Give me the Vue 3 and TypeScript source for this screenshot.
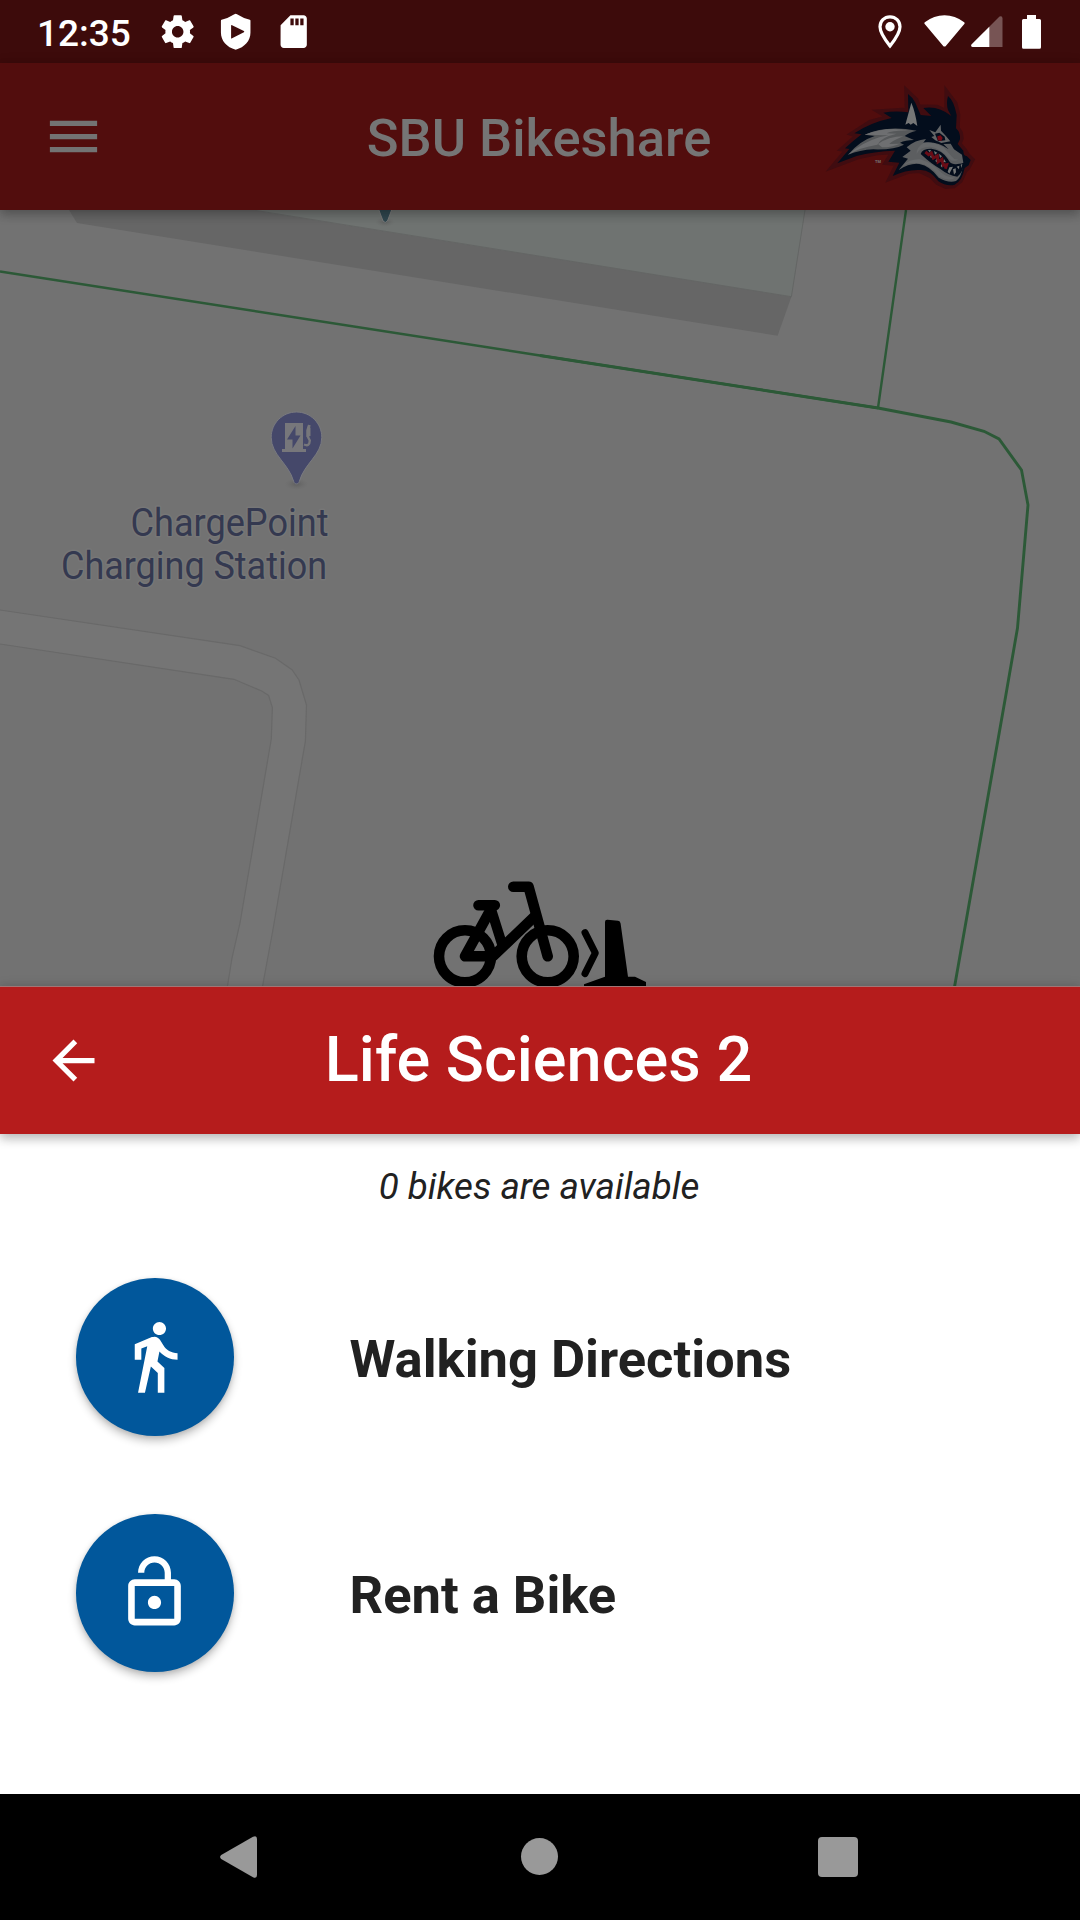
<script setup lang="ts">
interface Action {
  label: string
  icon: string
}

const stationName = 'Life Sciences 2'
const bikesAvailable = 0

const actions: Action[] = [
  {
    label: 'Walking Directions',
    icon: 'M13.5 5.5c1.1 0 2-.9 2-2s-.9-2-2-2-2 .9-2 2 .9 2 2 2zM9.8 8.9L7 23h2.1l1.8-8 2.1 2v6h2v-7.5l-2.1-2 .6-3C14.8 12 16.8 13 19 13v-2c-1.9 0-3.5-1-4.3-2.4l-1-1.6c-.4-.6-1-1-1.7-1-.3 0-.5.1-.8.1L6 8.3V13h2V9.6l1.8-.7',
  },
  {
    label: 'Rent a Bike',
    icon: 'M12 17c1.1 0 2-.9 2-2s-.9-2-2-2-2 .9-2 2 .9 2 2 2zm6-9h-1V6c0-2.76-2.24-5-5-5S7 3.24 7 6h1.9c0-1.71 1.39-3.1 3.1-3.1 1.71 0 3.1 1.39 3.1 3.1v2H6c-1.1 0-2 .9-2 2v10c0 1.1.9 2 2 2h12c1.1 0 2-.9 2-2V10c0-1.1-.9-2-2-2zm0 12H6V10h12v10z',
  },
]
</script>

<template>
  <div class="screen">
    <div class="status-bar">
      <span class="clock">12:35</span>
      <div class="notifications">
        <svg class="note" viewBox="0 0 24 24">
          <path
            d="M19.43 12.98c.04-.32.07-.64.07-.98s-.03-.66-.07-.98l2.11-1.65c.19-.15.24-.42.12-.64l-2-3.46c-.12-.22-.39-.3-.61-.22l-2.49 1c-.52-.4-1.08-.73-1.69-.98l-.38-2.65C14.46 2.18 14.25 2 14 2h-4c-.25 0-.46.18-.49.42l-.38 2.65c-.61.25-1.17.59-1.69.98l-2.49-1c-.23-.09-.49 0-.61.22l-2 3.46c-.13.22-.07.49.12.64l2.11 1.65c-.04.32-.07.65-.07.98s.03.66.07.98l-2.11 1.65c-.19.15-.24.42-.12.64l2 3.46c.12.22.39.3.61.22l2.49-1c.52.4 1.08.73 1.69.98l.38 2.65c.03.24.24.42.49.42h4c.25 0 .46-.18.49-.42l.38-2.65c.61-.25 1.17-.59 1.69-.98l2.49 1c.23.09.49 0 .61-.22l2-3.46c.12-.22.07-.49-.12-.64l-2.11-1.65zM12 15.5c-1.93 0-3.5-1.57-3.5-3.5s1.57-3.5 3.5-3.5 3.5 1.57 3.5 3.5-1.57 3.5-3.5 3.5z"
          />
        </svg>
        <svg class="note" viewBox="0 0 24 24">
          <path
            fill-rule="evenodd"
            d="M12 1.1 Q12.4 1.1 12.8 1.4 Q16.500 3.800 20.600 4.700 Q21 4.800 21 5.300V12.500C21 17.500 17.500 21.500 12 23C6.500 21.500 3 17.500 3 12.500V5.300Q3 4.800 3.400 4.700Q7.500 3.800 11.200 1.400Q11.600 1.100 12 1.100zM9.200 8.200V15.800Q9.300 16.300 9.800 16L17 12.400Q17.500 12 17 11.600L9.800 8Q9.300 7.700 9.200 8.200z"
          />
        </svg>
        <svg class="note" viewBox="0 0 24 24">
          <path
            d="M18 2h-8L4.02 8 4 20c0 1.1.9 2 2 2h12c1.1 0 2-.9 2-2V4c0-1.1-.9-2-2-2zm-6 6h-2V4h2v4zm3 0h-2V4h2v4zm3 0h-2V4h2v4z"
          />
        </svg>
      </div>
      <div class="system-icons">
        <svg class="gps" viewBox="0 0 24 34">
          <path
            d="M12 1.800C6.300 1.800 2 6.200 2 11.800C2 18.500 12 31 12 31S22 18.500 22 11.800C22 6.200 17.700 1.800 12 1.800z"
            fill="none"
            stroke="#fff"
            stroke-width="3.200"
          />
          <circle cx="12" cy="11.800" r="4.700" />
        </svg>
        <svg class="wifi" viewBox="0 0 41 32">
          <path d="M20.500 31.600Q21.300 31.600 22 30.700L40.500 8.800Q41 8 40.200 7.300Q31 .3 20.500 .3T.8 7.300Q0 8 .5 8.800L19 30.700Q19.700 31.600 20.500 31.600z" />
        </svg>
        <svg class="signal" viewBox="0 0 32 32">
          <path d="M.500 28.500L28.500 .600Q31.500 -.5 31.500 2.500V31H1.500Q-.5 30.500 .5 28.500z" opacity=".3" />
          <path d="M18.300 10.700V31H1.500Q-.5 30.500 .5 28.500z" />
        </svg>
        <svg class="battery" viewBox="0 0 19 34">
          <path d="M5 0H14V4H17.500Q19 4 19 5.500V32.300Q19 33.800 17.500 33.800H1.500Q0 33.800 0 32.300V5.500Q0 4 1.500 4H5z" />
        </svg>
      </div>
    </div>

    <header class="app-bar">
      <svg class="bar-icon" viewBox="0 0 24 24">
        <path d="M3 18h18v-2H3v2zm0-5h18v-2H3v2zm0-7v2h18V6H3z" />
      </svg>
      <h1 class="app-title">SBU Bikeshare</h1>
      <svg class="mascot" viewBox="0 0 510 360">
        <path
          class="halo"
          d="M52 250L88 207L75 205L120 165L105 160L152 130L215 113L190 98L248 94L265 97L264 42L285 62L300 105L330 108L310 84L350 85L392 106L384 90L384 48L402 72L410 105L408 145L418 160L420 175L413 192L430 212L440 228L452 240L440 262L432 270L418 300L400 314L378 316L355 305L335 285L300 268L265 270L218 288L238 248L205 245L225 212L170 215L110 228z"
        />
        <path
          class="navy"
          d="M52 250L88 207L75 205Q96 185 125 163L103 160Q150 128 215 114L190 98Q225 92 265 97L264 42Q278 52 286 68L302 105L334 108L310 84Q355 76 394 108L384 90Q378 70 384 48Q402 62 410 105L408 145Q422 158 420 178L413 192L430 212Q430 228 440 228L452 240L446 256L434 264Q426 304 404 314Q380 320 355 304Q330 268 300 270Q260 268 218 288L238 248L205 245L225 212Q160 214 110 228z"
        />
        <path
          fill="#56585a"
          d="M84 224Q120 182 164 168L134 164Q200 134 290 152Q266 158 254 168L282 180Q256 180 240 188L252 194Q222 210 160 208Q120 210 84 224z"
        />
        <path
          fill="#6e6f71"
          d="M84 224Q126 188 178 172L206 166L134 164Q200 138 268 152Q220 150 200 160L230 161Q182 172 172 194Q120 202 84 224zM174 192Q205 170 250 169Q214 184 208 192L240 191Q216 202 186 202z"
        />
        <path fill="#757676" d="M256 134L274 68Q286 96 292 138L280 129L272 134L266 129z" />
        <path
          fill="#5c5e60"
          d="M236 270L264 236L247 231L272 212L260 202Q285 180 318 177L310 188Q350 182 386 208L370 192L392 191L402 208L426 224L430 248L420 256L428 262Q424 292 408 303Q385 310 356 293Q330 258 298 252Q270 248 236 270z"
        />
        <path
          fill="#66686a"
          d="M250 256Q270 236 300 238Q340 250 362 276Q380 294 406 292Q390 306 358 290Q332 256 298 250Q270 246 250 256zM312 188Q346 186 370 202L396 230Q402 240 416 238Q400 248 388 236Q362 204 330 200Q300 200 290 222Q288 202 312 188z"
        />
        <path fill="#030d1c" d="M302 222Q306 206 334 206Q368 210 384 238Q392 256 412 252L432 250Q430 276 412 290Q385 286 360 266Q334 252 302 222z" />
        <path
          fill="none"
          stroke="#690c16"
          stroke-width="9"
          d="M316 216L326 224L334 219L340 234L352 227L354 246L366 238L370 256L380 254L376 266"
        />
        <path
          fill="#747676"
          d="M324 210L334 211L329 217zM342 213L352 218L345 224zM357 221L366 229L360 234zM372 237L378 247L371 246zM388 262L399 260L388 281L383 275zM399 268L407 265L408 277L402 284zM410 260L418 257L417 268zM422 254L427 252L424 264zM330 231L335 234L333 226zM346 243L351 247L349 237zM362 258L367 263L365 252z"
        />
        <path
          fill="#626466"
          d="M328 150L346 157L362 134L363 152L377 167L391 184L364 189L346 181L334 171L343 168z"
        />
        <path fill="#030d1c" d="M345 161L358 158L374 170L376 181L354 184z" />
        <path fill="#750b16" d="M352 169L362 166L368 174L364 183L353 181z" />
        <text x="165" y="248" class="tm">TM</text>
      </svg>
    </header>

    <main class="map">
      <svg class="map-canvas" viewBox="0 210 1080 777">
        <defs>
          <radialGradient id="pinShadow">
            <stop offset="0" stop-color="#525252" stop-opacity=".6" />
            <stop offset="1" stop-color="#666" stop-opacity="0" />
          </radialGradient>
        </defs>
        <path d="M69 210H253L791.400 296.700L777.600 335.700L77 223z" fill="#666" />
        <path d="M253 210H805L791.400 296.700z" fill="#6f7371" />
        <path d="M253 210L791.400 296.700L805 210" fill="none" stroke="#646665" stroke-width="1" />

        <path
          d="M0 610L240 645.700L275.500 658.300L292 669.700L299 680L306.500 705L305.400 741L272.700 931L262.400 987H227.300L232 958L240 923L271.300 739L272.400 707.500L268.600 695.500L261.700 691L234 679.300L0 644z"
          fill="#757575"
        />
        <path
          d="M0 610L240 645.700L275.500 658.300L292 669.700L299 680L306.500 705L305.400 741L272.700 931L262.400 987M227.300 987L232 958L240 923L271.300 739L272.400 707.500L268.600 695.500L261.700 691L234 679.300L0 644"
          fill="none"
          stroke="#696969"
          stroke-width="1.200"
        />

        <g class="paths">
          <path d="M0 271.500L540 355.500L878 408M906 210L878 408" stroke-width="2.400" />
          <path d="M540 355.500L878 408L951 422L984 431.300L999 439L1021.500 470L1028 505L1017.500 628L1005 700L954.500 987" stroke-width="2.900" />
        </g>

        <ellipse cx="385" cy="222" rx="10" ry="5" fill="url(#pinShadow)" />
        <path d="M378.500 209H392L387.500 221Q385.200 224 383 221z" fill="#30474f" stroke="#7b7b7b" stroke-width="1" />

        <ellipse cx="296.500" cy="484" rx="12" ry="6" fill="url(#pinShadow)" />
        <path
          d="M296.500 412C282.500 412 271.200 423.300 271.200 437.300C271.200 455 288.500 463 293.700 481.500C294.500 484.700 298.500 484.700 299.300 481.500C304.500 463 321.800 455 321.800 437.300C321.800 423.300 310.500 412 296.500 412z"
          fill="#45486a"
          stroke="#797a80"
          stroke-width="1"
        />
        <path d="M285 423H303V449H306V452H282V449H285z" fill="#77777b" />
        <path d="M295.500 426L287 439.500H292.500V448.500L300.500 435.500H295.500z" fill="#45486a" />
        <path
          d="M304 444.500Q309.500 447 309.800 440.500L308 437V431L309.500 425"
          fill="none"
          stroke="#77777b"
          stroke-width="2.400"
        />
        <path d="M306.300 430L308 424.500L310.500 428V436L306.300 437z" fill="#77777b" />

        <text class="poi" x="130.500" y="536" textLength="198" lengthAdjust="spacingAndGlyphs">ChargePoint</text>
        <text class="poi" x="61" y="579" textLength="266" lengthAdjust="spacingAndGlyphs">Charging Station</text>

        <g class="bike">
          <circle cx="465" cy="956.300" r="26" />
          <circle cx="547.700" cy="956.300" r="26" />
          <path d="M478.500 905.300H494.800M513.300 886.800H528.600L547.700 956.300" />
          <path d="M491 909L465 956.300H493L534 917" stroke-width="10.500" />
          <path d="M491 909L502 944" stroke-width="10" />
          <path d="M585 932.600L595.300 953L585 973.600" stroke-width="7" />
          <path
            d="M605 922Q605 919.500 607.500 919.700L618 920.700Q620.300 921 620.600 923.500L628 976.700H635L646 982V987H584V984.200L605 976.700z"
            class="dock"
          />
        </g>
      </svg>
    </main>

    <section class="sheet">
      <header class="sheet-bar">
        <svg class="bar-icon" viewBox="0 0 24 24">
          <path d="M20 11H7.830l5.590-5.590L12 4l-8 8 8 8 1.410-1.410L7.830 13H20v-2z" />
        </svg>
        <h2 class="sheet-title">{{ stationName }}</h2>
      </header>
      <p class="availability">{{ bikesAvailable }} bikes are available</p>
      <div class="actions">
        <div v-for="action in actions" :key="action.label" class="action">
          <button class="fab" type="button" :aria-label="action.label">
            <svg viewBox="0 0 24 24"><path :d="action.icon" /></svg>
          </button>
          <span class="action-label">{{ action.label }}</span>
        </div>
      </div>
    </section>

    <nav class="nav-bar">
      <svg class="nav-back" viewBox="0 0 37 42">
        <path d="M1.200 19L33 .800Q37 -1 37 3V39Q37 43 33 41.200L1.200 23Q-1 21 1.200 19z" />
      </svg>
      <span class="nav-home"></span>
      <span class="nav-recent"></span>
    </nav>
  </div>
</template>

<style>
body {
  margin: 0;
}
</style>

<style scoped>
.screen {
  width: 1080px;
  height: 1920px;
  display: flex;
  flex-direction: column;
  overflow: hidden;
  background: #727272;
  font-family: Roboto, "Liberation Sans", sans-serif;
}

.status-bar {
  height: 63px;
  flex: none;
  display: flex;
  align-items: center;
  box-sizing: border-box;
  padding: 0 39px 0 37px;
  background: #3d0b0b;
}

.status-bar svg {
  fill: #fff;
  display: block;
}

.clock {
  width: 121px;
  font-size: 37px;
  font-weight: 500;
  line-height: 43px;
  padding-top: 3px;
  color: #fff;
}

.notifications {
  display: flex;
  gap: 18.6px;
}

.note {
  width: 39.4px;
  height: 39.4px;
}

.system-icons {
  display: flex;
  align-items: center;
  margin-left: auto;
}

.gps {
  width: 24px;
  height: 34px;
  margin-right: 22px;
}

.wifi {
  width: 41px;
  height: 32px;
  margin: 0 6px 2px 0;
}

.signal {
  width: 32px;
  height: 32px;
  margin-right: 19px;
}

.battery {
  width: 19px;
  height: 34px;
}

.app-bar {
  height: 147px;
  flex: none;
  display: grid;
  grid-template-columns: 319px 440px 321px;
  align-items: center;
  position: relative;
  z-index: 1;
  background: #520d0d;
  box-shadow: 0 5px 10px rgba(0, 0, 0, 0.2), 0 1px 12px rgba(0, 0, 0, 0.14);
}

.bar-icon {
  width: 63px;
  height: 63px;
  margin-left: 42px;
  fill: #737373;
}

.app-title {
  margin: 0;
  text-align: center;
  font-size: 52.5px;
  font-weight: 500;
  line-height: 62px;
  padding-top: 3px;
  color: #757575;
}

.mascot {
  width: 170px;
  height: 120px;
  margin-left: 61px;
  margin-top: 7px;
}

.halo {
  fill: #400c10;
  stroke: #400c10;
  stroke-width: 22;
}

.navy {
  fill: #030d1c;
}

.tm {
  font-size: 12px;
  font-weight: 700;
  fill: #777;
}

.map {
  height: 776px;
  flex: none;
  overflow: hidden;
}

.map-canvas {
  display: block;
  width: 1080px;
  height: 777px;
}

.paths {
  fill: none;
  stroke: #2c5937;
}

.poi {
  font-size: 38px;
  fill: #343950;
  stroke: #777;
  stroke-width: 3px;
  paint-order: stroke;
  stroke-linejoin: round;
}

.bike {
  fill: none;
  stroke: #000;
  stroke-width: 10.6px;
  stroke-linecap: round;
  stroke-linejoin: round;
}

.dock {
  fill: #000;
  stroke: none;
}

.sheet {
  flex: 1;
  display: flex;
  flex-direction: column;
  background: #fff;
}

.sheet-bar {
  height: 146.5px;
  flex: none;
  display: grid;
  grid-template-columns: 239px 600px 241px;
  align-items: center;
  border-top: 1px solid #a37575;
  background: #b51c1c;
  box-shadow: 0 5px 10px rgba(0, 0, 0, 0.2), 0 1px 12px rgba(0, 0, 0, 0.14);
}

.sheet-bar .bar-icon {
  fill: #fff;
}

.sheet-title {
  margin: 0;
  text-align: center;
  font-size: 63px;
  font-weight: 500;
  line-height: 74px;
  padding: 0 1px 0 0;
  color: #fff;
}

.availability {
  margin: 31.5px 2px 0 0;
  text-align: center;
  font-size: 36.75px;
  font-style: italic;
  line-height: 44px;
  color: #212121;
}

.actions {
  display: flex;
  flex-direction: column;
  gap: 78.5px;
  padding: 69px 76px 0;
}

.action {
  display: flex;
  align-items: center;
  gap: 116px;
}

.fab {
  width: 157.5px;
  height: 157.5px;
  padding: 0;
  border: 0;
  border-radius: 50%;
  display: flex;
  align-items: center;
  justify-content: center;
  background: #01579b;
  box-shadow: 0 5px 8px rgba(0, 0, 0, 0.24), 0 1px 4px rgba(0, 0, 0, 0.1);
}

.fab svg {
  width: 79px;
  height: 79px;
  fill: #fff;
}

.action-label {
  font-size: 52.5px;
  font-weight: 700;
  line-height: 62px;
  padding-top: 5px;
  color: #212121;
}

.nav-bar {
  height: 126px;
  flex: none;
  display: flex;
  align-items: center;
  box-sizing: border-box;
  padding: 0 222px 1px 220px;
  background: #000;
}

.nav-back {
  width: 37px;
  height: 42px;
  fill: #999;
}

.nav-home {
  width: 37px;
  height: 37px;
  margin: 0 260px 0 264px;
  border-radius: 50%;
  background: #999;
}

.nav-recent {
  width: 40px;
  height: 40px;
  border-radius: 4px;
  background: #999;
}
</style>
